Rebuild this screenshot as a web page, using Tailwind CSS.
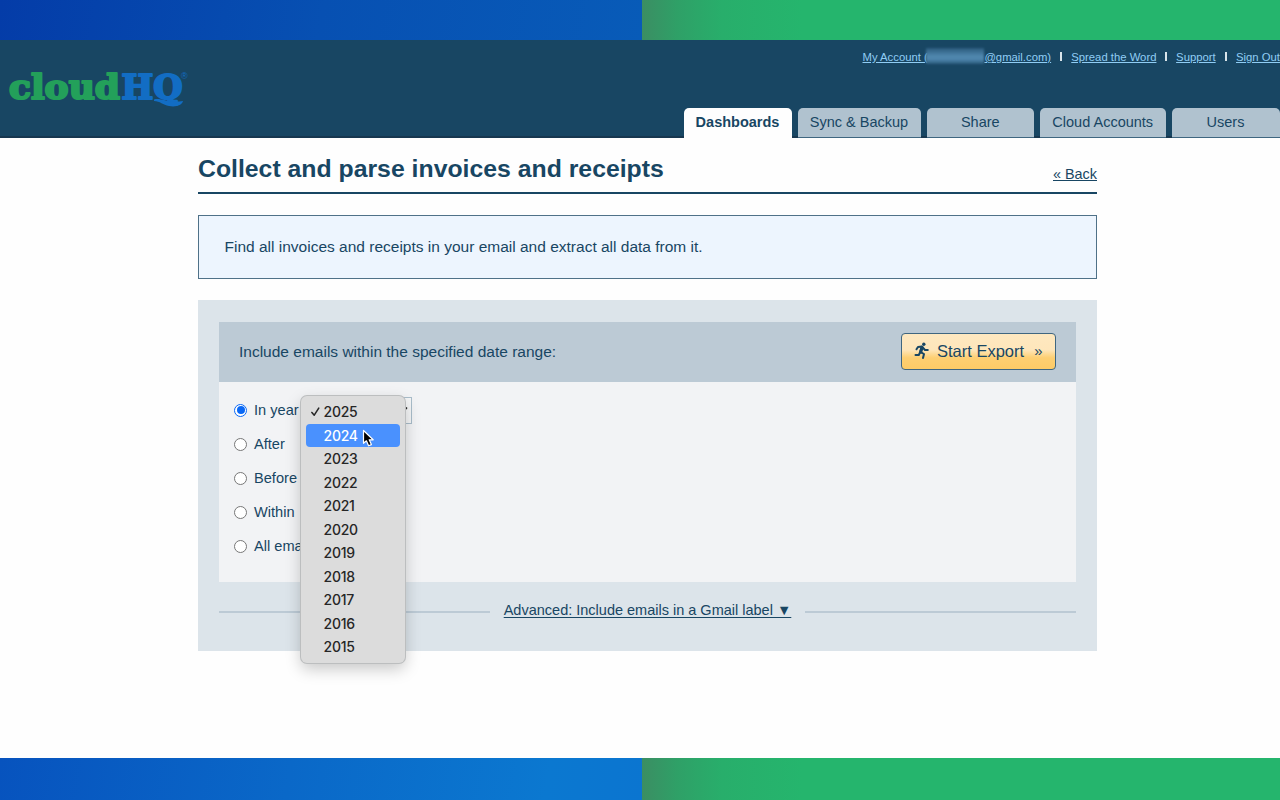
<!DOCTYPE html>
<html lang="en">
<head>
<meta charset="utf-8">
<title>cloudHQ</title>
<script src="https://cdn.jsdelivr.net/npm/@tailwindcss/browser@4"></script>
</head>
<body class="w-[1280px] h-[800px] overflow-hidden flex flex-col bg-[#fefefe] text-[#184663] font-['Liberation_Sans',Arial,sans-serif] text-[14.6px] leading-5">

<div class="flex h-10 shrink-0">
  <div class="w-[642px] bg-[linear-gradient(100deg,#043ca8_0%,#0750b2_50%,#085bb8_100%)]"></div>
  <div class="flex-1 bg-[linear-gradient(90deg,#3b8e63_0px,#2fa067_35px,#28ae6b_80px,#25b56d_160px)]"></div>
</div>

<header class="relative h-[98px] shrink-0 bg-[#184663] border-b-2 border-[#17374f] flex flex-col">
  <div class="h-[68px] shrink-0 flex justify-between">
    <svg class="w-[200px] h-[67px] shrink-0" viewBox="0 0 200 67" font-family="DejaVu Serif" font-weight="700" font-size="33" stroke-width="2.2" stroke-linejoin="round">
      <text x="9" y="59" textLength="111" lengthAdjust="spacingAndGlyphs" fill="#23a05a" stroke="#23a05a">cloud</text>
      <text x="121.5" y="59" textLength="61" lengthAdjust="spacingAndGlyphs" fill="#126dc4" stroke="#126dc4">HQ</text>
      <path d="M154 59.500c7-2 14 4 29 1.500c-1 4-7 6.500-14 5c-6-1-9-5-15-5z" fill="#126dc4" stroke="none"/>
      <text x="181" y="39" font-family="Liberation Sans" font-weight="400" font-size="9" fill="#126dc4" stroke="none">®</text>
    </svg>
    <nav class="flex h-5 mt-[7px] w-[417.500px] text-[11.3px] text-[#90cdf4] whitespace-nowrap">
      <a class="underline w-[63px]">My Account (</a>
      <span class="w-[59px] h-[16px] mt-[1px] bg-[linear-gradient(#2b5a7c,#4f86ad_50%,#4f86ad_70%,#2b5a7c)] blur-[1px]"></span>
      <a class="underline w-[76px]">@gmail.com)</a>
      <span class="w-[1.5px] h-[9px] mt-[5px] bg-[#d8e4ea]"></span>
      <a class="underline w-[86px] ml-[9.5px]">Spread the Word</a>
      <span class="w-[1.5px] h-[9px] mt-[5px] ml-[8px] bg-[#d8e4ea]"></span>
      <a class="underline w-[41px] ml-[9.5px]">Support</a>
      <span class="w-[1.5px] h-[9px] mt-[5px] ml-[8px] bg-[#d8e4ea]"></span>
      <a class="underline ml-[9.5px]">Sign Out</a>
    </nav>
  </div>
  <div class="flex pl-[683.5px] gap-[6px] h-[30px] shrink-0 leading-[29px] text-center text-[14.5px] whitespace-nowrap">
    <a class="w-[108px] shrink-0 rounded-t-[5px] bg-[#fefefe] font-bold">Dashboards</a>
    <a class="w-[123px] shrink-0 rounded-t-[5px] bg-[#b0c2cf] border-b border-[#3f6680]">Sync &amp; Backup</a>
    <a class="w-[107.500px] shrink-0 rounded-t-[5px] bg-[#b0c2cf] border-b border-[#3f6680]">Share</a>
    <a class="w-[125.500px] shrink-0 rounded-t-[5px] bg-[#b0c2cf] border-b border-[#3f6680]">Cloud Accounts</a>
    <a class="w-[108px] shrink-0 rounded-t-[5px] bg-[#b0c2cf] border-b border-[#3f6680]">Users</a>
  </div>
</header>

<main class="h-[620px] shrink-0 pl-[198px] flex flex-col">
  <div class="w-[899px] h-14 border-b-2 border-[#184663] flex justify-between shrink-0 whitespace-nowrap">
    <h1 class="text-[24.8px] font-bold leading-[61px]">Collect and parse invoices and receipts</h1>
    <a class="underline text-[14.4px] leading-[72px]">« Back</a>
  </div>
  <div class="mt-[21px] w-[899px] h-16 shrink-0 border border-[#4f7188] bg-[#edf5fe] pl-[25.5px] text-[15.5px] leading-[61px] whitespace-nowrap">Find all invoices and receipts in your email and extract all data from it.</div>

  <section class="mt-[21px] w-[899px] h-[351px] shrink-0 bg-[#dce4ea] pt-[22px] px-[21px] flex flex-col">
    <div class="h-[60px] shrink-0 bg-[#bccad5] flex items-center justify-between pl-5 pr-5 whitespace-nowrap">
      <span class="text-[15.5px]">Include emails within the specified date range:</span>
      <button class="w-[155px] h-[37px] -mt-[1px] rounded border border-[#3f6680] bg-[linear-gradient(#fee8c0_0%,#fee6bb_45%,#fdcf72_68%,#fdcb66_100%)] flex items-center pl-[12px] text-[16.5px]">
        <svg class="w-4 h-[18px] shrink-0 -mt-[2px]" viewBox="0 0 16 18" fill="none" stroke="#184663" stroke-width="2" stroke-linecap="round" stroke-linejoin="round"><circle cx="9.8" cy="2.3" r="1.7" fill="#184663" stroke="none"/><path d="M2.5 7.3L4 5l4-.4L11 8h2.8M8 5L6.2 9.8L10 12l-1 4M6 10.5L4.8 13H1.5"/><path d="M8 5.5L6.8 9.5" stroke-width="3.2"/></svg>
        <span class="ml-[7px] -mt-[1px]">Start Export</span><span class="ml-[10px] -mt-[1px] text-[15px]">»</span>
      </button>
    </div>
    <div class="relative h-[200px] shrink-0 bg-[#f2f3f5] pl-[15px] pt-[18px]">
      <div class="flex flex-col gap-[14px]">
        <label class="flex items-center gap-[7px] h-5"><span class="w-[13px] h-[13px] rounded-full border-[1.5px] border-[#0a68f5] bg-white flex items-center justify-center"><span class="w-2 h-2 rounded-full bg-[#0a68f5]"></span></span>In year</label>
        <label class="flex items-center gap-[7px] h-5"><span class="w-[13px] h-[13px] rounded-full border border-[#777] bg-white"></span>After</label>
        <label class="flex items-center gap-[7px] h-5"><span class="w-[13px] h-[13px] rounded-full border border-[#777] bg-white"></span>Before</label>
        <label class="flex items-center gap-[7px] h-5"><span class="w-[13px] h-[13px] rounded-full border border-[#777] bg-white"></span>Within</label>
        <label class="flex items-center gap-[7px] h-5"><span class="w-[13px] h-[13px] rounded-full border border-[#777] bg-white"></span>All emails</label>
      </div>
      <div class="absolute left-[86px] top-[15px] w-[107px] h-[27px] border-[1.5px] border-[#a9bdca] bg-[#f5f6f7]">
        <svg class="absolute right-[3px] top-[8px] w-2 h-2" viewBox="0 0 8 8" fill="none" stroke="#222" stroke-width="1.5"><path d="M0 1.5L3.5 5.5L7 1.5"/></svg>
      </div>
      <div class="absolute left-[82px] top-[14px] w-[104px] h-[267px] rounded-[6px] bg-[#dcdcdc] shadow-[0_0_0_1px_#bcbebf,0_6px_16px_rgba(0,0,0,0.22)] px-[5px] pt-[4px] text-[14px] tracking-[-0.25px] text-[#262626] font-[Inter,sans-serif] font-[450] leading-[23.5px]">
        <div class="pl-[17.5px] h-[23.5px]">2025</div>
        <div class="pl-[17.5px] h-[23.5px] rounded-[4px] bg-[#4a91fe] text-white">2024</div>
        <div class="pl-[17.5px] h-[23.5px]">2023</div>
        <div class="pl-[17.5px] h-[23.5px]">2022</div>
        <div class="pl-[17.5px] h-[23.5px]">2021</div>
        <div class="pl-[17.5px] h-[23.5px]">2020</div>
        <div class="pl-[17.5px] h-[23.5px]">2019</div>
        <div class="pl-[17.5px] h-[23.5px]">2018</div>
        <div class="pl-[17.5px] h-[23.5px]">2017</div>
        <div class="pl-[17.5px] h-[23.5px]">2016</div>
        <div class="pl-[17.5px] h-[23.5px]">2015</div>
        <svg class="absolute left-[10px] top-[11px] w-[9px] h-[10px]" viewBox="0 0 10 11" fill="none" stroke="#262626" stroke-width="1.7" stroke-linecap="round" stroke-linejoin="round"><path d="M1 6L3.6 9L8.6 1.2"/></svg>
        <svg class="absolute left-[61px] top-[33px] w-[14px] h-[19px]" viewBox="0 0 14 19"><path d="M1.5 1.5V14.3L4.4 11.8L6.6 16.8L9.4 15.6L7.2 10.8H11.2Z" fill="#000" stroke="#fff" stroke-width="1.2" stroke-linejoin="round"/></svg>
      </div>
    </div>
    <div class="h-[58px] flex items-center justify-between whitespace-nowrap">
      <span class="w-[271px] h-[2px] mt-[1px] bg-[#bccad5]"></span>
      <a class="underline underline-offset-2 text-[14.5px] -mt-[2px]">Advanced: Include emails in a Gmail label ▼</a>
      <span class="w-[271px] h-[2px] mt-[1px] bg-[#bccad5]"></span>
    </div>
  </section>
</main>

<div class="flex h-[42px] shrink-0">
  <div class="w-[642px] bg-[linear-gradient(100deg,#0753be_0%,#0a68c8_45%,#0b78d0_85%,#0b75d0_100%)]"></div>
  <div class="flex-1 bg-[linear-gradient(90deg,#3b8e63_0px,#2fa067_35px,#28ae6b_80px,#25b56d_160px)]"></div>
</div>
</body>
</html>
